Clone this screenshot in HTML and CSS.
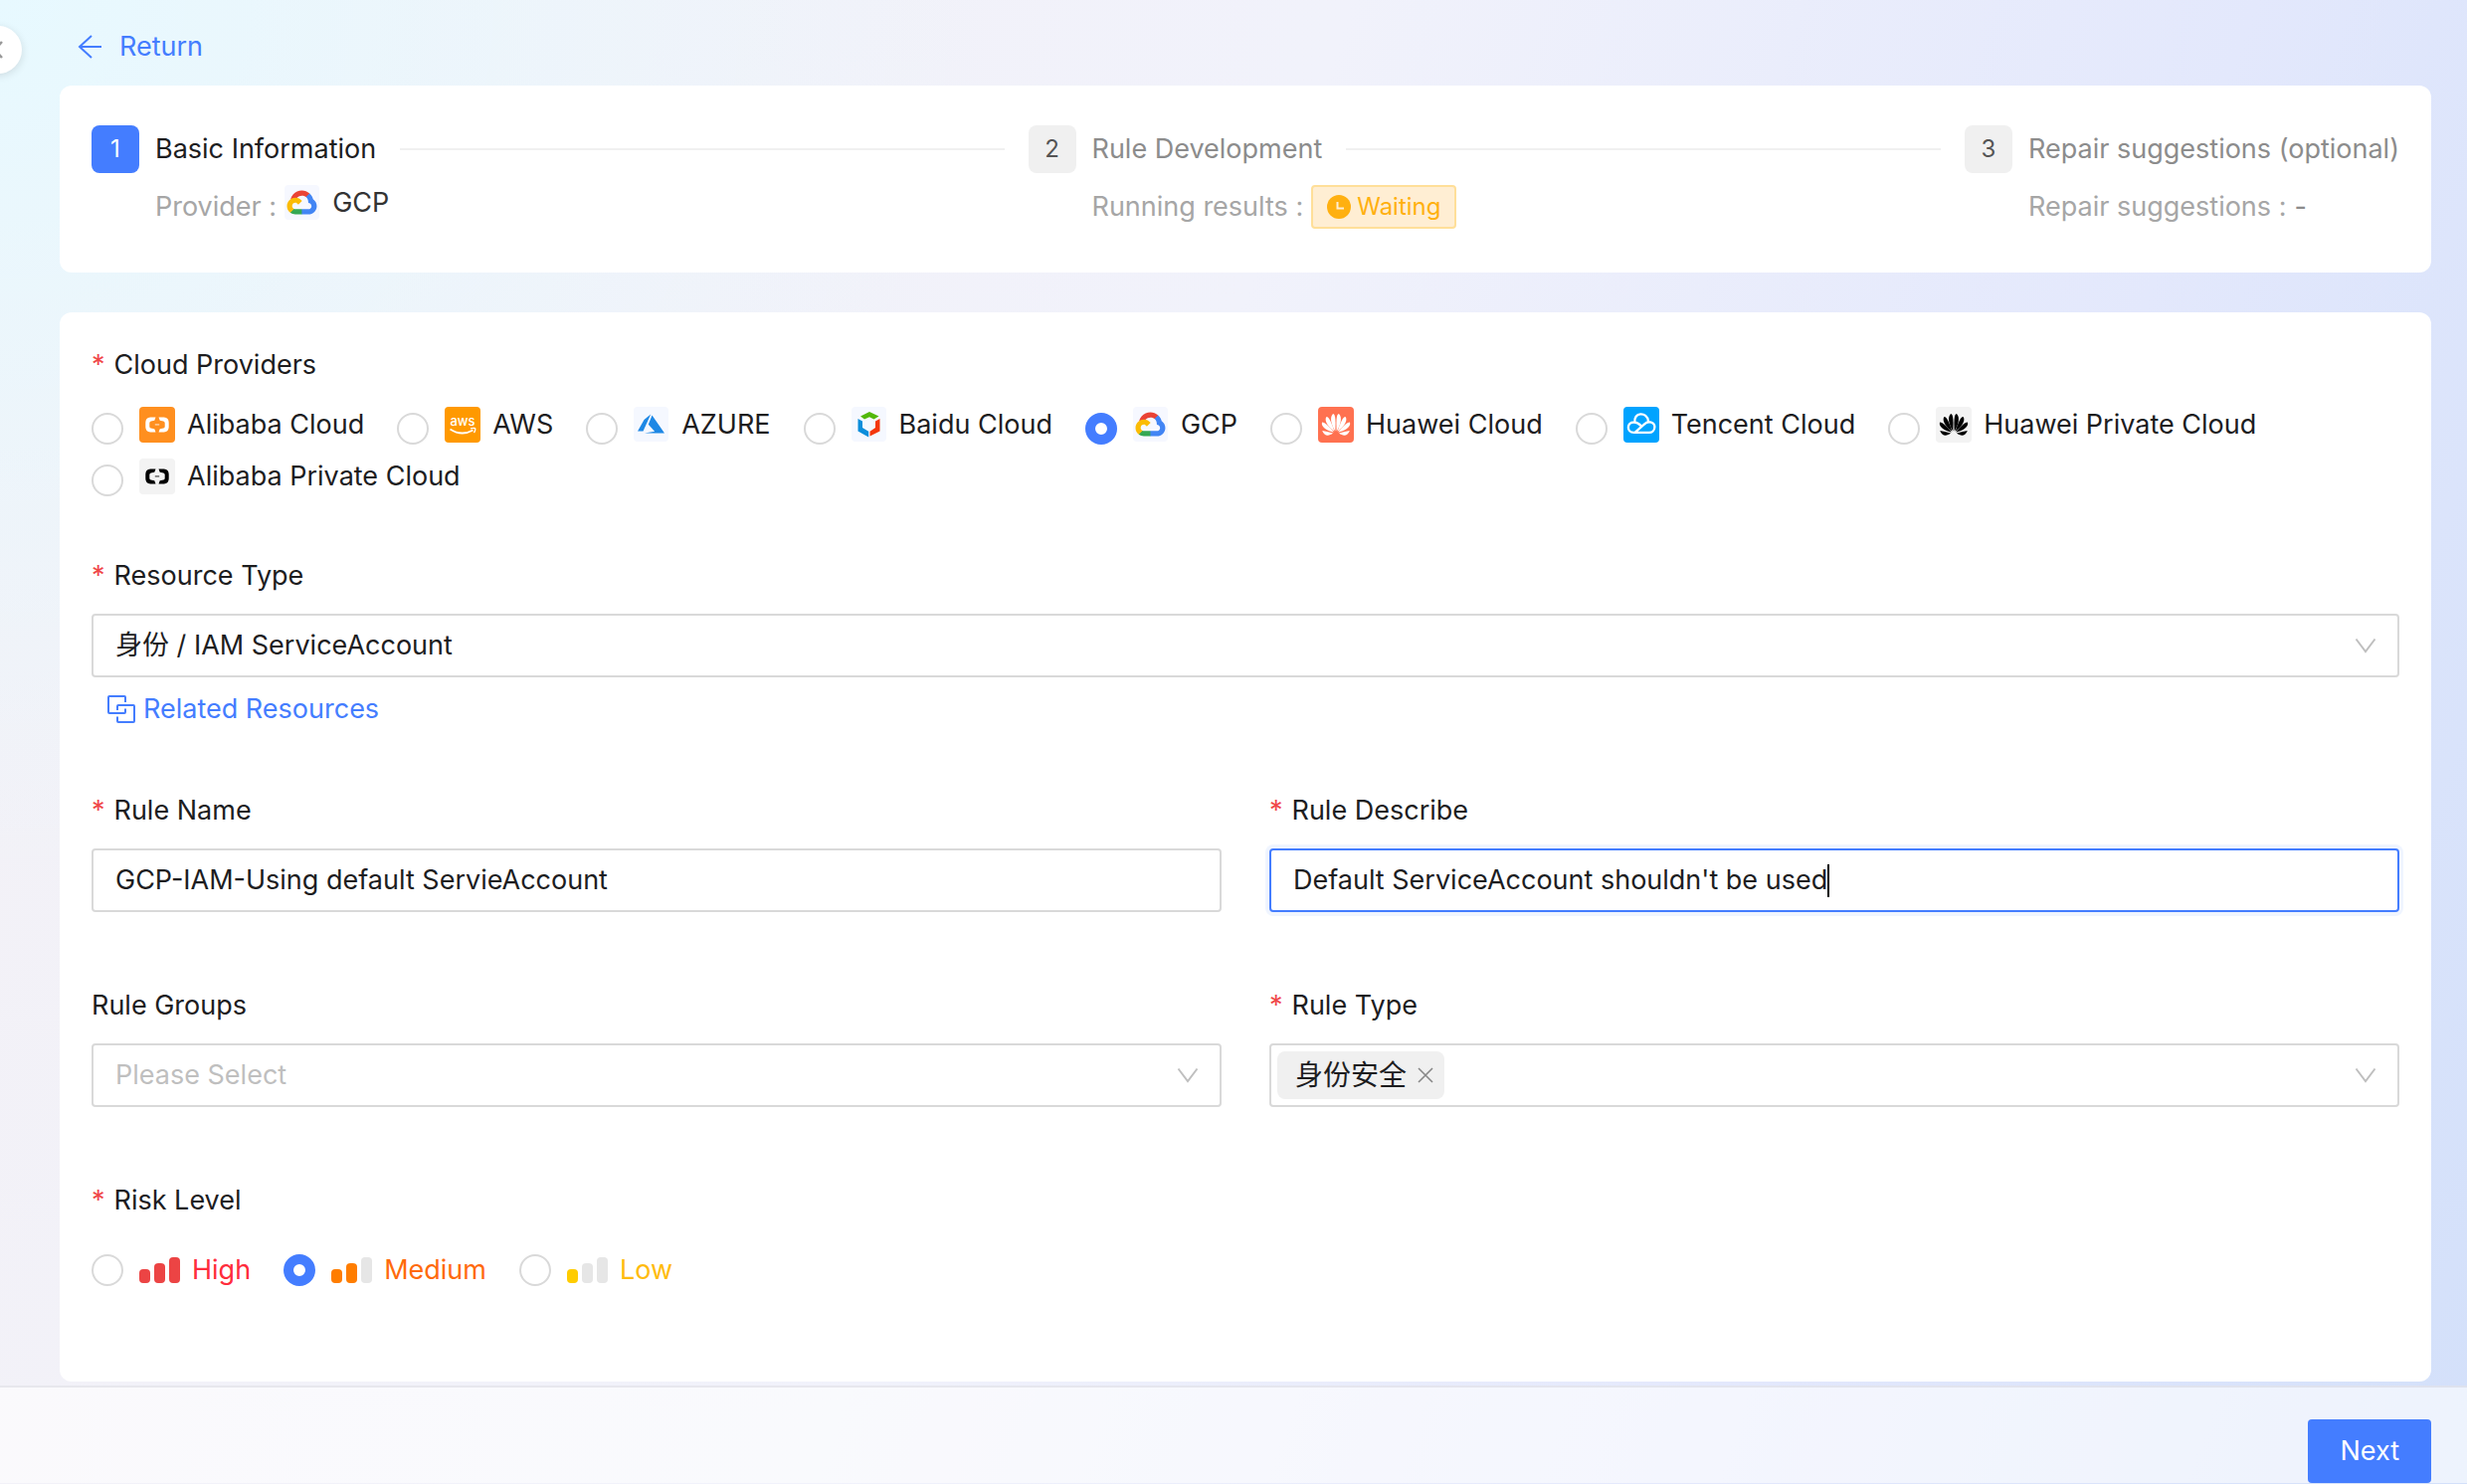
FILE: index.html
```html
<!DOCTYPE html>
<html lang="en">
<head>
    <meta charset="UTF-8">
    <meta name="viewport" content="width=device-width, initial-scale=1.0">
    <title>Rule - Basic Information</title>
    <link rel="stylesheet" href="styles.css">
</head>
<body>
    <!-- shared icons -->
    <svg class="sprite" aria-hidden="true">
        <symbol id="down" viewBox="0 0 24 24">
            <path d="M2.5 5.5 L12 18 L21.5 5.5" fill="none" stroke="#bfbfbf" stroke-width="2"/>
        </symbol>
        <symbol id="gcp" viewBox="0 0 36 36">
            <rect width="35" height="35" rx="4" fill="#f6f8ff"/>
            <g transform="translate(2.5 5.5) scale(0.117)">
                <path fill="#ea4335" d="M170.25 56.82L192.5 34.57L193.99 25.2C153.44 -11.68 88.98 -7.5 52.42 33.92C42.27 45.42 34.73 59.76 30.72 74.57L38.69 73.45L83.19 66.11L86.63 62.6C106.42 40.85 139.9 37.93 162.76 56.43Z"/>
                <path fill="#4285f4" d="M224.2 73.92C219.09 55.08 208.59 38.15 193.99 25.2L162.76 56.43C175.94 67.2 183.46 83.44 183.13 100.47V106C198.49 106 210.93 118.45 210.93 133.8C210.93 149.16 198.49 161.29 183.13 161.29H127.46L122 167.22V200.56L127.46 205.8H183.13C223.06 206.1 255.69 174.3 256 134.37C256.19 110.17 244.25 87.48 224.2 73.92"/>
                <path fill="#34a853" d="M71.87 205.8H127.46V161.29H71.87C67.91 161.29 64.07 160.44 60.47 158.79L52.58 161.21L30.18 183.46L28.22 191.04C40.79 200.53 56.12 205.86 71.87 205.8"/>
                <path fill="#fbbc05" d="M71.87 61.43C31.94 61.66 -0.24 94.23 0 134.16C0.13 156.46 10.55 177.45 28.22 191.04L60.47 158.79C46.48 152.47 40.26 136 46.58 122.02C52.9 108.03 69.37 101.81 83.36 108.13C89.52 110.91 94.46 115.85 97.25 122.02L129.49 89.77C115.77 71.83 94.45 61.34 71.87 61.43"/>
            </g>
        </symbol>
        <symbol id="aliyun" viewBox="0 0 36 36">
            <path d="M16.5 10.5 L15.3 13.7 L11.7 14.4 Q10.3 14.8 10.3 16.2 V19.8 Q10.3 21.2 11.7 21.6 L15.3 22.3 L16.5 25.5 H11.2 Q6.3 25 6.3 20.2 V15.8 Q6.3 11 11.2 10.5 Z"/>
            <path d="M19.5 10.5 L20.7 13.7 L24.3 14.4 Q25.7 14.8 25.7 16.2 V19.8 Q25.7 21.2 24.3 21.6 L20.7 22.3 L19.5 25.5 H24.8 Q29.7 25 29.7 20.2 V15.8 Q29.7 11 24.8 10.5 Z"/>
            <path d="M15.8 17.2 H20.2 V18.6 H15.8 Z" opacity="0.6"/>
        </symbol>
        <symbol id="huawei" viewBox="0 0 36 36">
            <g transform="translate(18 27)">
                <path d="M-0.7 -2.5 C-4.6 -8 -6.8 -17 -2.9 -20 C-0.2 -20 -0.2 -11 -0.7 -2.5Z"/>
                <path d="M0.7 -2.5 C4.6 -8 6.8 -17 2.9 -20 C0.2 -20 0.2 -11 0.7 -2.5Z"/>
                <path d="M-1.6 -2.3 C-7 -6 -12.5 -13 -9.6 -17 C-6.6 -17 -4 -9.5 -1.6 -2.3Z"/>
                <path d="M1.6 -2.3 C7 -6 12.5 -13 9.6 -17 C6.6 -17 4 -9.5 1.6 -2.3Z"/>
                <path d="M-2.2 -1.6 C-8 -2.4 -15.6 -6.5 -14 -11.5 C-11 -11.5 -6.4 -6.6 -2.2 -1.6Z"/>
                <path d="M2.2 -1.6 C8 -2.4 15.6 -6.5 14 -11.5 C11 -11.5 6.4 -6.6 2.2 -1.6Z"/>
                <path d="M-3 -0.4 C-7.5 3 -11.8 2.6 -13.8 -3 C-10.5 -2.6 -7 -1.6 -3 -0.4Z"/>
                <path d="M3 -0.4 C7.5 3 11.8 2.6 13.8 -3 C10.5 -2.6 7 -1.6 3 -0.4Z"/>
            </g>
        </symbol>
    </svg>

    <button class="collapse" type="button" aria-label="Collapse">
        <svg width="12" height="20" viewBox="0 0 12 20"><path d="M10 2 L2.5 10 L10 18" fill="none" stroke="#999" stroke-width="2.5"/></svg>
    </button>

    <main class="page">
        <header class="topbar">
            <a href="#" class="return">
                <svg width="24" height="24" viewBox="0 0 24 24"><path d="M14 1 L2 12 L14 23 M2 12 H24" fill="none" stroke="#447dff" stroke-width="2"/></svg>
                Return
            </a>
        </header>

        <section class="card steps">
            <div class="step active">
                <span class="step-icon">1</span>
                <div class="step-content">
                    <div class="step-title">Basic Information</div>
                    <div class="step-desc">Provider : <svg class="desc-logo" width="36" height="36"><use href="#gcp"/></svg> <span class="desc-value">GCP</span></div>
                </div>
            </div>
            <div class="step">
                <span class="step-icon">2</span>
                <div class="step-content">
                    <div class="step-title">Rule Development</div>
                    <div class="step-desc">Running results :
                        <span class="waiting">
                            <svg width="24" height="24" viewBox="0 0 24 24"><circle cx="12" cy="12" r="12" fill="#ffb010"/><path d="M10.5 7 V13.5 H17" fill="none" stroke="#ffeed3" stroke-width="2"/></svg>
                            Waiting
                        </span>
                    </div>
                </div>
            </div>
            <div class="step">
                <span class="step-icon">3</span>
                <div class="step-content">
                    <div class="step-title">Repair suggestions (optional)</div>
                    <div class="step-desc">Repair suggestions : <span class="dash">-</span></div>
                </div>
            </div>
        </section>

        <form class="card form" id="ruleForm">
            <fieldset class="field full">
                <legend class="required">Cloud Providers</legend>
                <div class="providers">
                    <label class="radio"><input type="radio" name="provider">
                        <svg width="36" height="36" fill="#fff"><rect width="36" height="36" rx="4" fill="#ff8f1f"/><use href="#aliyun"/></svg>
                        Alibaba Cloud</label>
                    <label class="radio"><input type="radio" name="provider">
                        <svg width="36" height="36"><rect width="36" height="36" rx="4" fill="#ff9900"/><text x="18" y="19" class="aws">aws</text><path d="M5.5 22.5 Q17 30 28.5 23.5" fill="none" stroke="#fff" stroke-width="1.8"/><path d="M26 21.8 Q31.5 20.8 30.8 22.6 Q30.6 24.5 29.5 26" fill="none" stroke="#fff" stroke-width="1.3"/></svg>
                        AWS</label>
                    <label class="radio"><input type="radio" name="provider">
                        <svg width="36" height="36"><rect width="35" height="35" rx="4" fill="#f5f8ff"/><path d="M17.2 7.5 L10.5 13 L4 24.5 H9.5 Z" fill="#1e88e5"/><path d="M18.5 8.5 L14.8 17.8 L21.2 24.8 L11 26.5 H31 Z" fill="#1e88e5"/></svg>
                        AZURE</label>
                    <label class="radio"><input type="radio" name="provider">
                        <svg width="36" height="36"><rect width="35" height="35" rx="4" fill="#f5f8ff"/><path d="M9 9.5 L18 5 L27.5 9.5 L22.5 12.5 L18 10.2 L13 12.5 Z" fill="#52b80a"/><path d="M6.5 12 L11 14.5 V21 L17.2 24.8 V30.5 L6.5 24.5 Z" fill="#0c8edb"/><path d="M28.5 12 L24 14.5 V21 L18.5 24.8 V29.5 L28.5 24.5 Z" fill="#f4370c"/></svg>
                        Baidu Cloud</label>
                    <label class="radio"><input type="radio" name="provider" checked>
                        <svg width="36" height="36"><use href="#gcp"/></svg>
                        GCP</label>
                    <label class="radio"><input type="radio" name="provider">
                        <svg width="36" height="36" fill="#fff"><rect width="36" height="36" rx="4" fill="#ff7150"/><use href="#huawei"/></svg>
                        Huawei Cloud</label>
                    <label class="radio"><input type="radio" name="provider">
                        <svg width="36" height="36"><rect width="36" height="36" rx="4" fill="#00a3ff"/><path d="M11.5 16 C9.5 5 24 4.5 25 14.5 M15.5 25.8 H10.5 C3 25.8 3 15.5 10.5 15.5 C13.5 15.5 15.5 17 18 19.3 M11.5 25.8 L20.5 17.8 C26 12.5 32 16.5 31.3 21 C31 24 28.5 25.8 26 25.8 H11.5" fill="none" stroke="#fff" stroke-width="2.3"/></svg>
                        Tencent Cloud</label>
                    <label class="radio"><input type="radio" name="provider">
                        <svg width="36" height="36"><rect width="36" height="36" rx="4" fill="#f3f3f3"/><use href="#huawei"/></svg>
                        Huawei Private Cloud</label>
                    <label class="radio"><input type="radio" name="provider">
                        <svg width="36" height="36"><rect width="36" height="36" rx="4" fill="#f3f3f3"/><use href="#aliyun"/></svg>
                        Alibaba Private Cloud</label>
                </div>
            </fieldset>

            <div class="field full resource">
                <label for="resourceType" class="required">Resource Type</label>
                <div class="select">
                    <select id="resourceType">
                        <option>身份 / IAM ServiceAccount</option>
                    </select>
                    <svg class="arrow"><use href="#down"/></svg>
                </div>
                <a href="#" class="related">
                    <svg width="28" height="28" viewBox="0 0 28 28"><path d="M18 7 V2 Q18 1 17 1 H2 Q1 1 1 2 V17 Q1 18 2 18 H17 Q18 18 18 17 V13.5 M10 15 V11 Q10 10 11 10 H26 Q27 10 27 11 V26 Q27 27 26 27 H11 Q10 27 10 26 V21.5" fill="none" stroke="#447dff" stroke-width="2"/></svg>
                    Related Resources
                </a>
            </div>

            <div class="field">
                <label for="ruleName" class="required">Rule Name</label>
                <div class="box"><input type="text" id="ruleName" value="GCP-IAM-Using default ServieAccount"></div>
            </div>
            <div class="field">
                <label for="ruleDescribe" class="required">Rule Describe</label>
                <div class="box focused"><input type="text" id="ruleDescribe" value="Default ServiceAccount shouldn't be used"><span class="caret"></span></div>
            </div>

            <div class="field">
                <label for="ruleGroups">Rule Groups</label>
                <div class="select">
                    <select id="ruleGroups" class="placeholder">
                        <option>Please Select</option>
                    </select>
                    <svg class="arrow"><use href="#down"/></svg>
                </div>
            </div>
            <div class="field">
                <label for="ruleType" class="required">Rule Type</label>
                <div class="select box tags">
                    <span class="tag">身份安全
                        <button type="button" aria-label="Remove"><svg width="18" height="18" viewBox="0 0 18 18"><path d="M2 2 L16 16 M16 2 L2 16" stroke="#888" stroke-width="1.6"/></svg></button>
                    </span>
                    <input type="text" id="ruleType">
                    <svg class="arrow"><use href="#down"/></svg>
                </div>
            </div>

            <fieldset class="field full">
                <legend class="required">Risk Level</legend>
                <div class="risks">
                    <label class="radio high"><input type="radio" name="risk">
                        <span class="bars"><i class="on"></i><i class="on"></i><i class="on"></i></span>High</label>
                    <label class="radio medium"><input type="radio" name="risk" checked>
                        <span class="bars"><i class="on"></i><i class="on"></i><i></i></span>Medium</label>
                    <label class="radio low"><input type="radio" name="risk">
                        <span class="bars"><i class="on"></i><i></i><i></i></span>Low</label>
                </div>
            </fieldset>
        </form>
    </main>

    <footer class="footer">
        <button type="submit" form="ruleForm" class="next">Next</button>
    </footer>
</body>
</html>
```

FILE: styles.css
```css
* {
    box-sizing: border-box;
}

body {
    margin: 0;
    min-height: 100vh;
    font-family: Inter, "Noto Sans CJK SC", sans-serif;
    font-size: 27px;
    line-height: 44px;
    color: #1d1d1f;
    background:
        radial-gradient(ellipse 40% 60% at 0 0, #e7f9ff 0%, rgba(231, 249, 255, 0) 100%),
        linear-gradient(110deg, #f3f1f6 0%, #f1f2fb 45%, #e3e8fc 75%, #d3e0fa 100%);
}

input, select, button {
    font: inherit;
    color: inherit;
}

a {
    color: #447dff;
    text-decoration: none;
}

.sprite {
    position: absolute;
    width: 0;
    height: 0;
}

.collapse {
    position: absolute;
    top: 26px;
    left: -26px;
    width: 48px;
    height: 48px;
    padding: 0 18px 0 0;
    border: none;
    border-radius: 50%;
    background: #fff;
    box-shadow: 0 2px 8px rgba(0, 0, 0, 0.12);
    display: flex;
    align-items: center;
    justify-content: flex-end;
}

.page {
    padding: 0 36px 4px 60px;
}

.topbar {
    height: 86px;
    padding: 8px 18px 0;
    display: flex;
    align-items: center;
}

.return {
    display: flex;
    align-items: center;
    gap: 18px;
}

.card {
    background: #fff;
    border-radius: 12px;
}

/* steps */
.steps {
    display: flex;
    gap: 24px;
    padding: 40px 32px 44px;
    margin-bottom: 40px;
}

.step {
    display: flex;
    gap: 16px;
    flex: 1;
    color: #8c8c8c;
}

.step:last-child {
    flex: none;
}

.step-icon {
    width: 48px;
    height: 48px;
    flex: none;
    border-radius: 8px;
    background: #f0f0f0;
    color: #555;
    font-size: 24px;
    line-height: 48px;
    text-align: center;
}

.active .step-icon {
    background: #447dff;
    color: #fff;
}

.step-content {
    flex: 1;
}

.step-title {
    display: flex;
    align-items: center;
    gap: 24px;
    line-height: 48px;
    margin-bottom: 12px;
    white-space: nowrap;
}

.active .step-title {
    color: #1d1d1f;
}

.step:not(:last-child) .step-title::after {
    content: "";
    flex: 1;
    height: 2px;
    background: #f0f0f0;
}

.step-desc {
    display: flex;
    align-items: center;
    gap: 8px;
    height: 44px;
    color: #a6a6a6;
    white-space: nowrap;
}

.desc-logo, .desc-value {
    margin-bottom: 8px;
}

.desc-value {
    margin-left: 4px;
    color: #333;
}

.dash {
    color: #8c8c8c;
}

.waiting {
    display: flex;
    align-items: center;
    gap: 6px;
    height: 44px;
    padding: 0 14px;
    border: 2px solid #ffdf99;
    border-radius: 4px;
    background: #ffeed3;
    color: #ffb010;
    font-size: 24px;
}

/* form */
.form {
    display: grid;
    grid-template-columns: 1fr 1fr;
    gap: 72px 48px;
    padding: 31px 32px 80px;
}

.field {
    min-width: 0;
    margin: 0;
    padding: 0;
    border: none;
}

.full {
    grid-column: 1 / -1;
}

.field > label, legend {
    display: block;
    padding: 0;
    margin-bottom: 16px;
}

.required::before {
    content: "*";
    margin-right: 9px;
    color: #f04848;
}

.providers, .risks {
    display: flex;
    flex-wrap: wrap;
    column-gap: 33px;
}

.providers {
    margin: -4px 0 -20px;
}

.radio {
    display: flex;
    align-items: center;
    height: 52px;
}

.risks .radio {
    height: 64px;
}

.radio input {
    appearance: none;
    width: 32px;
    height: 32px;
    margin: 0 16px 0 0;
    border: 2px solid #d9d9d9;
    border-radius: 50%;
    background: #fff;
}

.radio input:checked {
    border: 10px solid #447dff;
}

.providers input {
    margin-top: 8px;
}

.providers svg {
    margin-right: 12px;
}

.aws {
    fill: #fff;
    font-size: 13px;
    font-weight: 500;
    text-anchor: middle;
}

.box, select {
    display: flex;
    align-items: center;
    width: 100%;
    height: 64px;
    padding: 0 22px;
    border: 2px solid #d9d9d9;
    border-radius: 4px;
    background: #fff;
}

.box input {
    flex: 1;
    min-width: 0;
    padding: 0;
    border: none;
    outline: none;
    background: none;
}

.focused {
    border-color: #447dff;
    box-shadow: 0 0 0 4px #f0f5ff;
}

.focused input {
    flex: none;
    field-sizing: content;
}

.caret {
    width: 2px;
    height: 33px;
    background: #000;
}

.select {
    position: relative;
}

select {
    appearance: none;
    outline: none;
}

.placeholder {
    color: #bfbfbf;
}

.arrow {
    position: absolute;
    top: 50%;
    right: 22px;
    width: 24px;
    height: 24px;
    margin-top: -12px;
    pointer-events: none;
}

.tags {
    padding: 0 6px;
}

.tags .arrow {
    right: 20px;
}

.tag {
    display: flex;
    align-items: center;
    gap: 10px;
    height: 48px;
    padding: 0 10px 0 18px;
    border-radius: 8px;
    background: #f0f0f0;
    font-size: 28px;
}

.tag button {
    display: flex;
    padding: 0;
    border: none;
    background: none;
}

.resource {
    margin-bottom: -14px;
}

.related {
    display: flex;
    align-items: center;
    gap: 8px;
    width: fit-content;
    margin: 10px 0 0 16px;
}

.bars {
    display: flex;
    align-items: flex-end;
    gap: 4px;
    margin-right: 12px;
}

.bars i {
    width: 11px;
    height: 14px;
    border-radius: 4px;
    background: #e6e6e6;
}

.bars i:nth-child(2) {
    height: 20px;
}

.bars i:nth-child(3) {
    height: 26px;
}

.high { color: #ff2c3c; }
.medium { color: #ff6a0c; }
.low { color: #ffbb0c; }
.high .on { background: #ec4444; }
.medium .on { background: #ff7d00; }
.low .on { background: #ffcc00; }

/* bottom bar */
.footer {
    display: flex;
    justify-content: flex-end;
    padding: 32px 36px 0;
    border-top: 2px solid rgba(226, 226, 232, 0.7);
    background: rgba(255, 255, 255, 0.6);
    background-clip: padding-box;
}

.next {
    height: 64px;
    padding: 0 32px;
    border: none;
    border-radius: 4px;
    background: #447dff;
    color: #fff;
}
```
